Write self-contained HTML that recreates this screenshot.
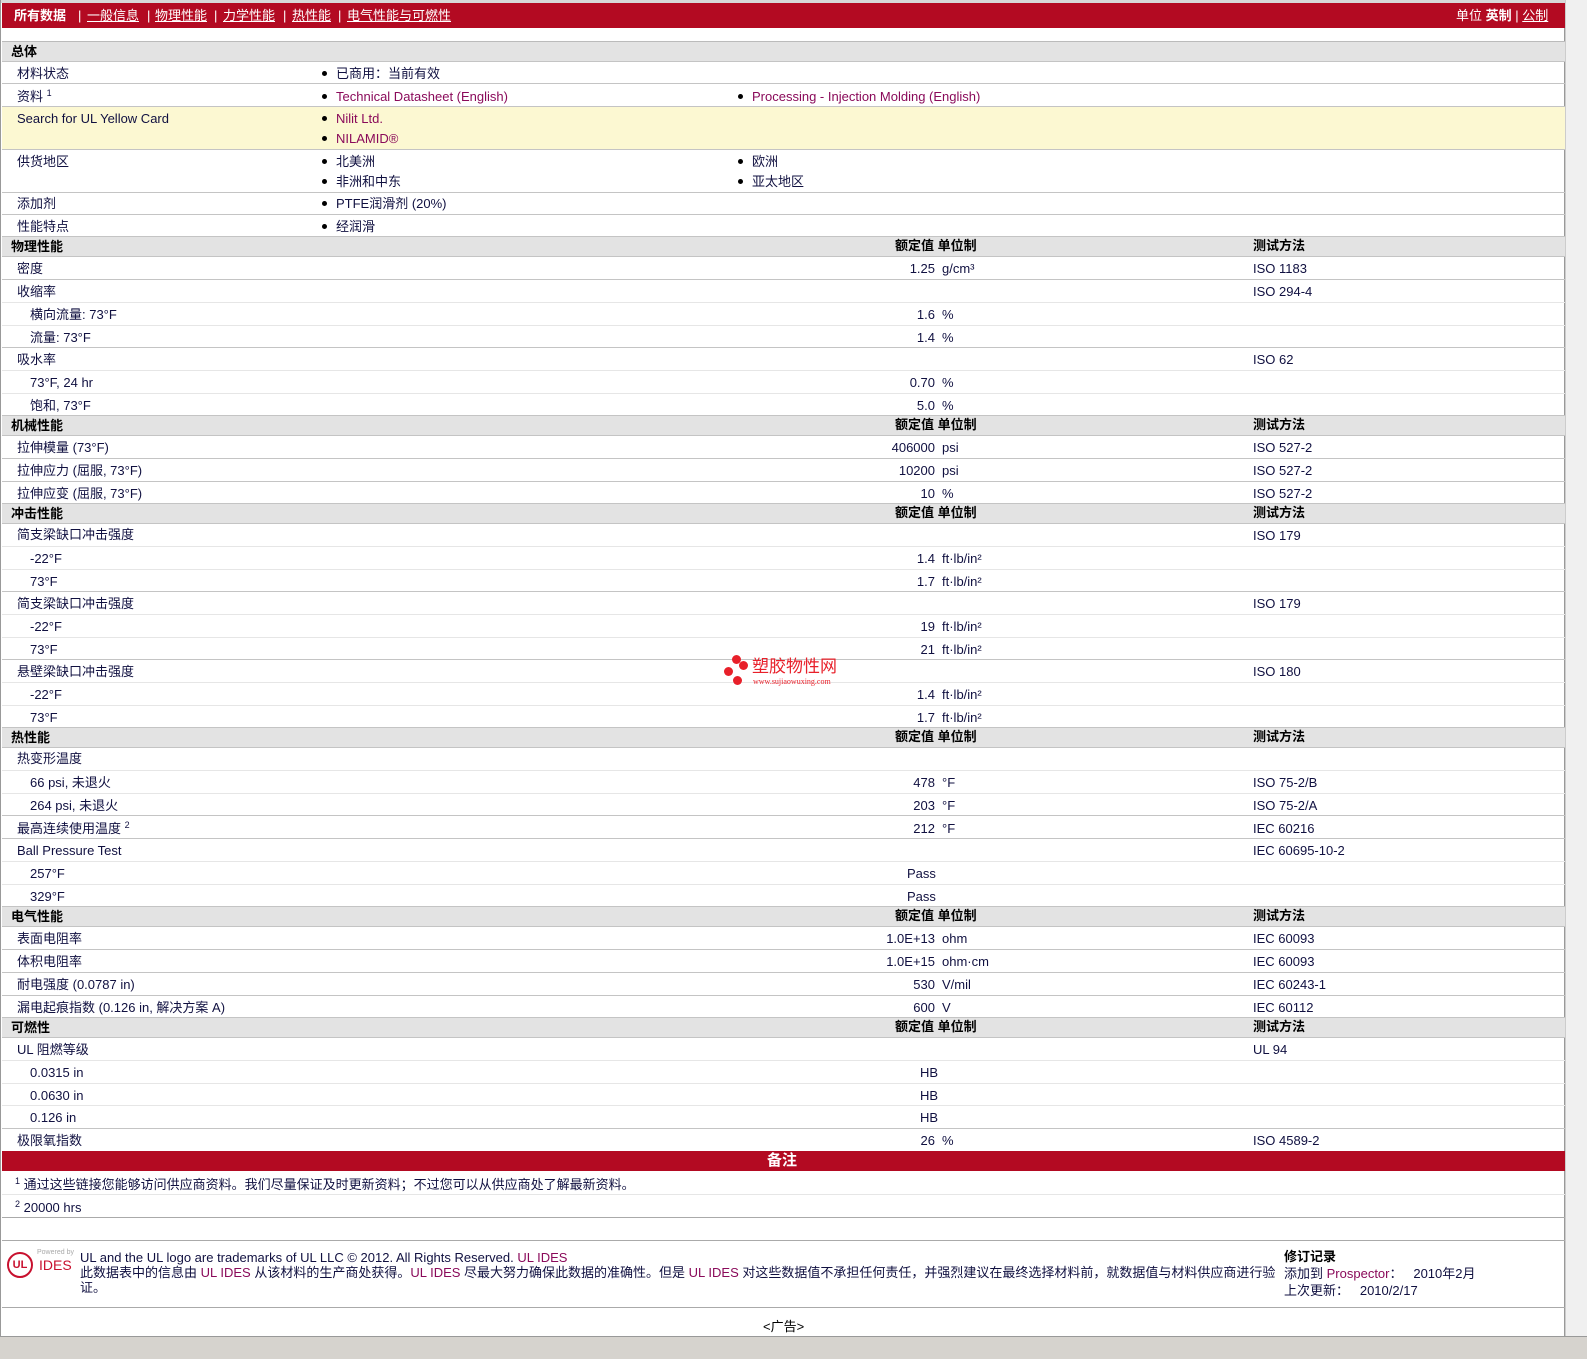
<!DOCTYPE html>
<html><head><meta charset="utf-8">
<style>
*{margin:0;padding:0;box-sizing:border-box}
body{width:1587px;height:1359px;position:relative;background:#fff;font-family:"Liberation Sans","Noto Sans CJK SC",sans-serif;font-size:13px;line-height:15px;color:#101040;overflow:hidden}
.main{position:absolute;left:0;top:0;width:1565px;height:1336px;border-left:1px solid #999;border-right:1px solid #999}
.scroll{position:absolute;left:1565px;top:0;width:22px;height:1336px;background:#f0f0f0;border-left:1px solid #ccc}
.bar{position:absolute;left:1px;top:3px;width:1563px;height:25px;background:#b30a22;color:#fff}
.tabs{position:absolute;left:0;top:0;width:1565px;height:3px;background:#d8d8d8}
.bar span{position:absolute;top:5px;font-size:13px;line-height:15px}
.bar u{text-decoration:underline}
.r{position:absolute;left:1px;width:1563px;border-bottom:1px solid #c4c4c4}
.s{border-bottom:1px solid #e6e6e6}
.h{background:#e3e3e3;font-weight:bold;color:#000;border-bottom:1px solid #c4c4c4}
.r div{position:absolute;white-space:nowrap;line-height:15px}
.l{left:15px}.li{left:28px}
.v{right:630px;text-align:right}
.u{left:940px}
.m{left:1251px}
.b1{left:320px}.b2{left:736px}
.lk{color:#8a0a5a}
.b1:before,.b2:before{content:"";display:inline-block;width:5px;height:5px;border-radius:50%;background:#000;margin-right:9px;vertical-align:2px}
sup{font-size:9px;vertical-align:5px;line-height:0}
</style></head><body>
<div class="main">
<div class="tabs"></div>
<div class="bar">
<span style="left:12px;font-weight:bold">所有数据</span>
<span style="left:76px">|</span><span style="left:85px"><u>一般信息</u></span>
<span style="left:145px">|</span><span style="left:153px"><u>物理性能</u></span>
<span style="left:212px">|</span><span style="left:221px"><u>力学性能</u></span>
<span style="left:281px">|</span><span style="left:290px"><u>热性能</u></span>
<span style="left:336px">|</span><span style="left:345px"><u>电气性能与可燃性</u></span>
<span style="left:1454px">单位 <b>英制</b> | <u>公制</u></span>
</div>
<div class="r" style="top:28px;height:14px;border-bottom:1px solid #bbb"></div>

<div class="r h" style="top:42px;height:20px"><div class="l" style="left:9px;top:2px">总体</div></div>
<div class="r" style="top:62px;height:22px"><div class="l" style="top:4px">材料状态</div><div class="b1" style="top:4px">已商用：当前有效</div></div>
<div class="r" style="top:84px;height:23px"><div class="l" style="top:5px">资料 <sup>1</sup></div><div class="b1 lk" style="top:5px">Technical Datasheet (English)</div><div class="b2 lk" style="top:5px">Processing - Injection Molding (English)</div></div>
<div class="r" style="top:107px;height:43px;background:#fcf8d2"><div class="l" style="top:4px">Search for UL Yellow Card</div><div class="b1 lk" style="top:4px">Nilit Ltd.</div><div class="b1 lk" style="top:24px">NILAMID®</div></div>
<div class="r" style="top:150px;height:43px"><div class="l" style="top:4px">供货地区</div><div class="b1" style="top:4px">北美洲</div><div class="b2" style="top:4px">欧洲</div><div class="b1" style="top:24px">非洲和中东</div><div class="b2" style="top:24px">亚太地区</div></div>
<div class="r" style="top:193px;height:22px"><div class="l" style="top:3px">添加剂</div><div class="b1" style="top:3px">PTFE润滑剂 (20%)</div></div>
<div class="r" style="top:215px;height:22px"><div class="l" style="top:4px">性能特点</div><div class="b1" style="top:4px">经润滑</div></div>

<div class="r h" style="top:237px;height:20px"><div style="left:9px;top:2px">物理性能</div><div style="left:893px;top:1px">额定值 单位制</div><div class="m" style="top:1px">测试方法</div></div>
<div class="r" style="top:257px;height:23px"><div class="l" style="top:4px">密度</div><div class="v" style="top:4px">1.25</div><div class="u" style="top:4px">g/cm³</div><div class="m" style="top:4px">ISO 1183</div></div>
<div class="r s" style="top:280px;height:23px"><div class="l" style="top:4px">收缩率</div><div class="m" style="top:4px">ISO 294-4</div></div>
<div class="r s" style="top:303px;height:23px"><div class="li" style="top:4px">横向流量: 73°F</div><div class="v" style="top:4px">1.6</div><div class="u" style="top:4px">%</div></div>
<div class="r" style="top:326px;height:22px"><div class="li" style="top:4px">流量: 73°F</div><div class="v" style="top:4px">1.4</div><div class="u" style="top:4px">%</div></div>
<div class="r s" style="top:348px;height:23px"><div class="l" style="top:4px">吸水率</div><div class="m" style="top:4px">ISO 62</div></div>
<div class="r s" style="top:371px;height:23px"><div class="li" style="top:4px">73°F, 24 hr</div><div class="v" style="top:4px">0.70</div><div class="u" style="top:4px">%</div></div>
<div class="r" style="top:394px;height:22px"><div class="li" style="top:4px">饱和, 73°F</div><div class="v" style="top:4px">5.0</div><div class="u" style="top:4px">%</div></div>

<div class="r h" style="top:416px;height:20px"><div style="left:9px;top:2px">机械性能</div><div style="left:893px;top:1px">额定值 单位制</div><div class="m" style="top:1px">测试方法</div></div>
<div class="r" style="top:436px;height:23px"><div class="l" style="top:4px">拉伸模量 (73°F)</div><div class="v" style="top:4px">406000</div><div class="u" style="top:4px">psi</div><div class="m" style="top:4px">ISO 527-2</div></div>
<div class="r" style="top:459px;height:23px"><div class="l" style="top:4px">拉伸应力 (屈服, 73°F)</div><div class="v" style="top:4px">10200</div><div class="u" style="top:4px">psi</div><div class="m" style="top:4px">ISO 527-2</div></div>
<div class="r" style="top:482px;height:22px"><div class="l" style="top:4px">拉伸应变 (屈服, 73°F)</div><div class="v" style="top:4px">10</div><div class="u" style="top:4px">%</div><div class="m" style="top:4px">ISO 527-2</div></div>

<div class="r h" style="top:504px;height:20px"><div style="left:9px;top:2px">冲击性能</div><div style="left:893px;top:1px">额定值 单位制</div><div class="m" style="top:1px">测试方法</div></div>
<div class="r s" style="top:524px;height:23px"><div class="l" style="top:3px">简支梁缺口冲击强度</div><div class="m" style="top:4px">ISO 179</div></div>
<div class="r s" style="top:547px;height:23px"><div class="li" style="top:4px">-22°F</div><div class="v" style="top:4px">1.4</div><div class="u" style="top:4px">ft·lb/in²</div></div>
<div class="r" style="top:570px;height:22px"><div class="li" style="top:4px">73°F</div><div class="v" style="top:4px">1.7</div><div class="u" style="top:4px">ft·lb/in²</div></div>
<div class="r s" style="top:592px;height:23px"><div class="l" style="top:4px">简支梁缺口冲击强度</div><div class="m" style="top:4px">ISO 179</div></div>
<div class="r s" style="top:615px;height:23px"><div class="li" style="top:4px">-22°F</div><div class="v" style="top:4px">19</div><div class="u" style="top:4px">ft·lb/in²</div></div>
<div class="r" style="top:638px;height:22px"><div class="li" style="top:4px">73°F</div><div class="v" style="top:4px">21</div><div class="u" style="top:4px">ft·lb/in²</div></div>
<div class="r s" style="top:660px;height:23px"><div class="l" style="top:4px">悬壁梁缺口冲击强度</div><div class="m" style="top:4px">ISO 180</div></div>
<div class="r s" style="top:683px;height:23px"><div class="li" style="top:4px">-22°F</div><div class="v" style="top:4px">1.4</div><div class="u" style="top:4px">ft·lb/in²</div></div>
<div class="r" style="top:706px;height:22px"><div class="li" style="top:4px">73°F</div><div class="v" style="top:4px">1.7</div><div class="u" style="top:4px">ft·lb/in²</div></div>

<div class="r h" style="top:728px;height:20px"><div style="left:9px;top:2px">热性能</div><div style="left:893px;top:1px">额定值 单位制</div><div class="m" style="top:1px">测试方法</div></div>
<div class="r s" style="top:748px;height:23px"><div class="l" style="top:3px">热变形温度</div></div>
<div class="r s" style="top:771px;height:23px"><div class="li" style="top:4px">66 psi, 未退火</div><div class="v" style="top:4px">478</div><div class="u" style="top:4px">°F</div><div class="m" style="top:4px">ISO 75-2/B</div></div>
<div class="r" style="top:794px;height:22px"><div class="li" style="top:4px">264 psi, 未退火</div><div class="v" style="top:4px">203</div><div class="u" style="top:4px">°F</div><div class="m" style="top:4px">ISO 75-2/A</div></div>
<div class="r" style="top:816px;height:23px"><div class="l" style="top:5px">最高连续使用温度 <sup>2</sup></div><div class="v" style="top:5px">212</div><div class="u" style="top:5px">°F</div><div class="m" style="top:5px">IEC 60216</div></div>
<div class="r s" style="top:839px;height:23px"><div class="l" style="top:4px">Ball Pressure Test</div><div class="m" style="top:4px">IEC 60695-10-2</div></div>
<div class="r s" style="top:862px;height:23px"><div class="li" style="top:4px">257°F</div><div style="left:905px;top:4px">Pass</div></div>
<div class="r" style="top:885px;height:22px"><div class="li" style="top:4px">329°F</div><div style="left:905px;top:4px">Pass</div></div>

<div class="r h" style="top:907px;height:20px"><div style="left:9px;top:2px">电气性能</div><div style="left:893px;top:1px">额定值 单位制</div><div class="m" style="top:1px">测试方法</div></div>
<div class="r" style="top:927px;height:23px"><div class="l" style="top:4px">表面电阻率</div><div class="v" style="top:4px">1.0E+13</div><div class="u" style="top:4px">ohm</div><div class="m" style="top:4px">IEC 60093</div></div>
<div class="r" style="top:950px;height:23px"><div class="l" style="top:4px">体积电阻率</div><div class="v" style="top:4px">1.0E+15</div><div class="u" style="top:4px">ohm·cm</div><div class="m" style="top:4px">IEC 60093</div></div>
<div class="r" style="top:973px;height:23px"><div class="l" style="top:4px">耐电强度 (0.0787 in)</div><div class="v" style="top:4px">530</div><div class="u" style="top:4px">V/mil</div><div class="m" style="top:4px">IEC 60243-1</div></div>
<div class="r" style="top:996px;height:22px"><div class="l" style="top:4px">漏电起痕指数 (0.126 in, 解决方案 A)</div><div class="v" style="top:4px">600</div><div class="u" style="top:4px">V</div><div class="m" style="top:4px">IEC 60112</div></div>

<div class="r h" style="top:1018px;height:20px"><div style="left:9px;top:2px">可燃性</div><div style="left:893px;top:1px">额定值 单位制</div><div class="m" style="top:1px">测试方法</div></div>
<div class="r s" style="top:1038px;height:23px"><div class="l" style="top:4px">UL 阻燃等级</div><div class="m" style="top:4px">UL 94</div></div>
<div class="r s" style="top:1061px;height:23px"><div class="li" style="top:4px">0.0315 in</div><div style="left:918px;top:4px">HB</div></div>
<div class="r s" style="top:1084px;height:22px"><div class="li" style="top:4px">0.0630 in</div><div style="left:918px;top:4px">HB</div></div>
<div class="r" style="top:1106px;height:23px"><div class="li" style="top:4px">0.126 in</div><div style="left:918px;top:4px">HB</div></div>
<div class="r" style="top:1129px;height:22px;border-bottom:none"><div class="l" style="top:4px">极限氧指数</div><div class="v" style="top:4px">26</div><div class="u" style="top:4px">%</div><div class="m" style="top:4px">ISO 4589-2</div></div>

<div class="r" style="top:1151px;height:20px;background:#b30a22;border:none"><div style="left:765px;top:2px;color:#fff;font-weight:bold;font-size:15px;line-height:16px">备注</div></div>
<div class="r s" style="top:1171px;height:24px"><div class="l" style="left:13px;top:6px"><sup>1</sup> 通过这些链接您能够访问供应商资料。我们尽量保证及时更新资料；不过您可以从供应商处了解最新资料。</div></div>
<div class="r" style="top:1195px;height:23px;border-bottom:1px solid #aaa"><div class="l" style="left:13px;top:5px"><sup>2</sup> 20000 hrs</div></div>
<div class="r" style="top:1218px;height:23px;border-bottom:1px solid #aaa"></div>
<div class="r" style="top:1241px;height:67px;border-bottom:1px solid #aaa">
 <div style="left:5px;top:11px;width:26px;height:26px;border:2px solid #c8102e;border-radius:50%;color:#c8102e;font-size:11px;font-weight:bold;text-align:center;line-height:22px">UL</div>
 <div style="left:35px;top:8px;font-size:7px;color:#aaa;line-height:8px">Powered by</div>
 <div style="left:37px;top:17px;font-size:14px;color:#c8102e">IDES</div>
 <div style="left:78px;top:9px">UL and the UL logo are trademarks of UL LLC © 2012. All Rights Reserved. <span class="lk">UL IDES</span></div>
 <div style="left:78px;top:24px">此数据表中的信息由 <span class="lk">UL IDES</span> 从该材料的生产商处获得。<span class="lk">UL IDES</span> 尽最大努力确保此数据的准确性。但是 <span class="lk">UL IDES</span> 对这些数据值不承担任何责任，并强烈建议在最终选择材料前，就数据值与材料供应商进行验</div>
 <div style="left:78px;top:39px">证。</div>
 <div style="left:1282px;top:8px;font-weight:bold;color:#000">修订记录</div>
 <div style="left:1282px;top:25px">添加到 <span class="lk">Prospector</span>：&nbsp;&nbsp; 2010年2月</div>
 <div style="left:1282px;top:42px">上次更新：&nbsp;&nbsp; 2010/2/17</div>
</div>
<div style="position:absolute;left:762px;top:1319px;color:#000">&lt;广告&gt;</div>

<div style="position:absolute;left:722px;top:655px;width:40px;height:36px">
 <div style="position:absolute;left:9px;top:0;width:9px;height:9px;border-radius:50%;background:#e8202a"></div>
 <div style="position:absolute;left:16px;top:6px;width:9px;height:9px;border-radius:50%;background:#e8202a"></div>
 <div style="position:absolute;left:1px;top:12px;width:9px;height:9px;border-radius:50%;background:#e8202a"></div>
 <div style="position:absolute;left:10px;top:21px;width:9px;height:9px;border-radius:50%;background:#e8202a"></div>
</div>
<div style="position:absolute;left:751px;top:658px;color:#e8202a;font-size:17px;line-height:18px">塑胶物性网</div>
<div style="position:absolute;left:752px;top:677px;color:#e8202a;font-size:8px;line-height:9px;font-family:'Liberation Serif',serif">www.sujiaowuxing.com</div>
</div>
<div class="scroll"></div>
<div style="position:absolute;left:0;top:1336px;width:1587px;height:23px;background:#d6d3ce;border-top:1px solid #999"></div>
</body></html>
